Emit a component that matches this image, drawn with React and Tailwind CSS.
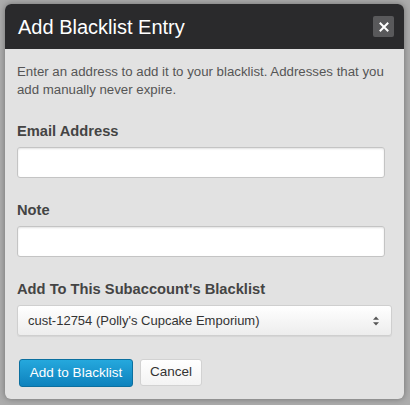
import React from 'react';

export default function App() {
  return (
    <div className="w-[410px] h-[405px] bg-[#acacac] pt-[4px] pl-[5px] font-['Liberation_Sans',Arial,sans-serif]">
      <div className="w-[399px] h-[395px] rounded-[6px] overflow-hidden bg-[#e2e2e2] shadow-[0_0_6px_rgba(0,0,0,0.35)] flex flex-col">
        {/* header */}
        <div className="h-[45px] bg-[#2a2a2c] flex items-center justify-between pl-[13px] pr-[10px]">
          <h3 className="text-white text-[20px] leading-none">Add Blacklist Entry</h3>
          <button className="w-[21px] h-[21px] rounded-[2px] bg-[#59595b] flex items-center justify-center">
            <svg width="10" height="10" viewBox="0 0 10 10">
              <path d="M1.5 1.5 L8.5 8.5 M8.5 1.5 L1.5 8.5" stroke="#fff" strokeWidth="2" strokeLinecap="square" />
            </svg>
          </button>
        </div>

        {/* body */}
        <div className="px-[12px] pt-[14px]">
          <p className="text-[13.25px] leading-[18px] text-[#555]">
            Enter an address to add it to your blacklist. Addresses that you add manually never expire.
          </p>

          <label className="block mt-[22px] text-[14.7px] leading-[20px] font-bold text-[#444]">Email Address</label>
          <input className="block mt-[6px] w-[368px] h-[31px] bg-white border border-[#c4c4c4] rounded-[3px] shadow-[inset_0_1px_2px_rgba(0,0,0,0.12)] outline-none px-[8px] text-[14px]" />

          <label className="block mt-[22px] text-[14.7px] leading-[20px] font-bold text-[#444]">Note</label>
          <input className="block mt-[6px] w-[368px] h-[31px] bg-white border border-[#c4c4c4] rounded-[3px] shadow-[inset_0_1px_2px_rgba(0,0,0,0.12)] outline-none px-[8px] text-[14px]" />

          <label className="block mt-[22px] text-[14.7px] leading-[20px] font-bold text-[#444]">Add To This Subaccount's Blacklist</label>
          <div className="mt-[6px] w-full h-[31px] flex items-center justify-between rounded-[3px] border border-[#cfcfcf] bg-gradient-to-b from-white to-[#ededed] pl-[10px] pr-[11px] shadow-[0_1px_1px_rgba(0,0,0,0.06)]">
            <span className="text-[13px] text-[#333]">cust-12754 (Polly's Cupcake Emporium)</span>
            <svg width="8" height="12" viewBox="0 0 8 12">
              <path d="M4 1.5 L7 4.8 H1 Z" fill="#555" />
              <path d="M4 10.5 L7 7.2 H1 Z" fill="#555" />
            </svg>
          </div>

          <div className="mt-[23px] flex gap-[7px] pl-[2px]">
            <button className="h-[28px] w-[114px] rounded-[3px] border border-[#0b6f9f] bg-gradient-to-b from-[#25a8dd] to-[#0d82bd] text-white text-[13.5px]">
              Add to Blacklist
            </button>
            <button className="h-[27px] w-[62px] rounded-[3px] border border-[#d2d2d2] bg-gradient-to-b from-white to-[#f3f3f3] text-[#333] text-[13.5px]">
              Cancel
            </button>
          </div>
        </div>
      </div>
    </div>
  );
}
